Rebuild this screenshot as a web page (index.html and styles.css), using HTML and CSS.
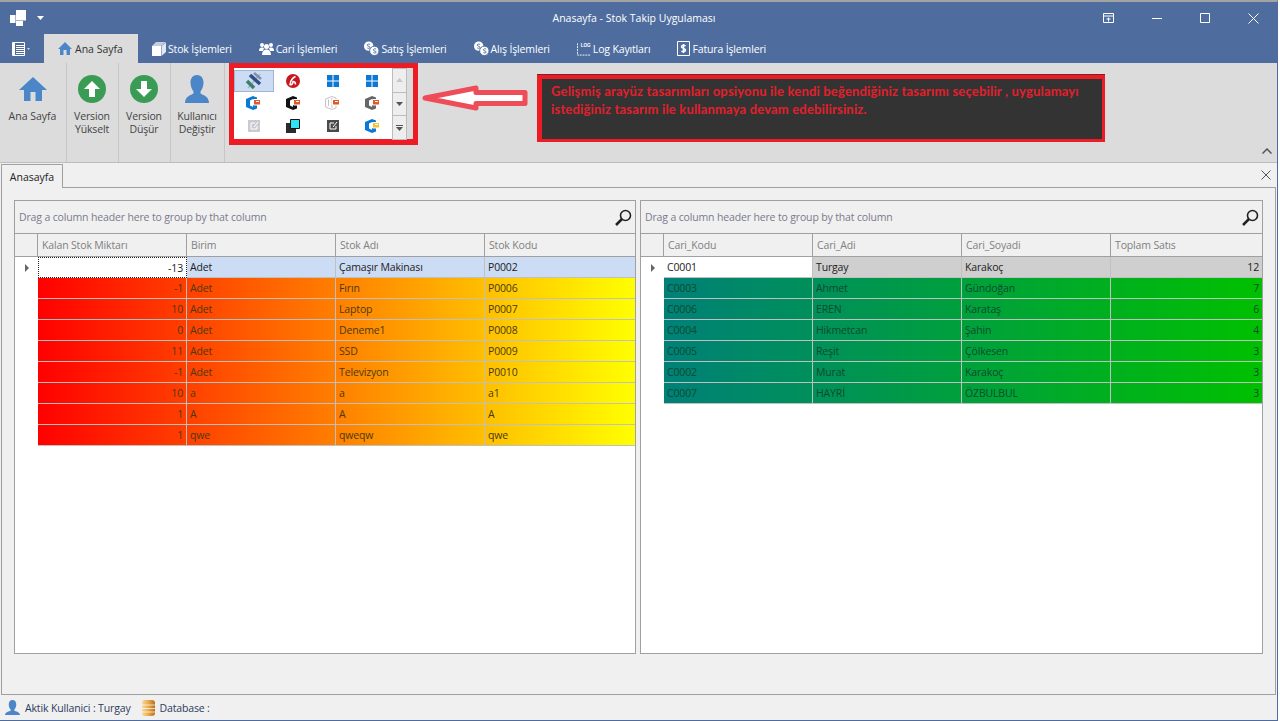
FILE: index.html
```html
<!DOCTYPE html>
<html lang="en">
<head>
  <meta charset="UTF-8">
  <title>Anasayfa - Stok Takip Uygulaması</title>
  <link rel="stylesheet" href="styles.css">
</head>
<body>
  <div class="window">
    <div class="titlebar">
      <div class="title-left">
        <svg width="17" height="16" viewBox="0 0 17 16"><path fill="#fff" d="M0 5h5.500v8H0zM6 0h10v10.500H6zM6 11h7v5H6z"/></svg>
        <svg class="title-caret" width="7" height="4" viewBox="0 0 7 4"><path fill="#fff" d="M0 0h7L3.500 4z"/></svg>
      </div>
      <div class="title-text">Anasayfa - Stok Takip Uygulaması</div>
      <div class="win-buttons">
        <div class="win-btn"><svg width="12" height="11" viewBox="0 0 12 11"><path fill="none" stroke="#fff" d="M.5.5h10v9H.5zM.5 3h10M5.500 4.500v4M3.500 6h4"/></svg></div>
        <div class="win-btn"><svg width="11" height="11" viewBox="0 0 11 11"><path stroke="#fff" d="M0 5.500h10"/></svg></div>
        <div class="win-btn"><svg width="11" height="11" viewBox="0 0 11 11"><path fill="none" stroke="#fff" d="M.5.5h9v9h-9z"/></svg></div>
        <div class="win-btn"><svg width="11" height="11" viewBox="0 0 11 11"><path stroke="#fff" d="M.5.5l10 10M10.500.5l-10 10"/></svg></div>
      </div>
    </div>

    <div class="tabs">
      <div class="file-btn">
        <svg width="13" height="14" viewBox="0 0 13 14"><path fill="none" stroke="#fff" d="M.5.5h12v13H.5z"/><path fill="#fff" d="M1 1h2v12H1z"/><path stroke="#fff" d="M4 3.500h8M4 5.500h8M4 7.500h8M4 9.500h8M4 11.500h8"/></svg>
        <svg width="3" height="2" viewBox="0 0 3 2"><path fill="#cfd8e6" d="M0 0h3L1.500 2z"/></svg>
      </div>
      <div class="tab active">
        <svg width="14" height="13" viewBox="0 0 14 13"><path fill="#4a86c8" d="M7 0l7 7h-2v6H8.500V8h-3v5H2V7H0z"/></svg>
        Ana Sayfa
      </div>
      <div class="tab">
        <svg width="14" height="14" viewBox="0 0 14 14"><path fill="#fff" d="M0 4h9v10H0z"/><path fill="#c4cede" d="M0 4l4-4h10L9 4z"/><path fill="#e4e8ef" d="M9.500 4L14 .5V10l-4.500 4z"/></svg>
        Stok İşlemleri
      </div>
      <div class="tab">
        <svg width="15" height="13" viewBox="0 0 15 13"><g fill="#fff"><circle cx="3" cy="3" r="2"/><circle cx="12" cy="3" r="2"/><path d="M0 9c0-3 1.500-3.500 3-3.500S5 6 5 6L4 9z"/><path d="M15 9c0-3-1.500-3.500-3-3.500S10 6 10 6l1 3z"/><circle cx="7.500" cy="4.500" r="2.500"/><path d="M3 13c0-4 2.500-5.500 4.500-5.500S12 9 12 13z"/></g></svg>
        Cari İşlemleri
      </div>
      <div class="tab">
        <svg width="15" height="15" viewBox="0 0 16 15"><circle cx="5" cy="5" r="5" fill="#fff"/><circle cx="11" cy="10" r="5" fill="#fff" stroke="#4e6d9e"/><path fill="none" stroke="#4e6d9e" d="M6.500 3.200C5.500 2.500 3.500 2.700 3.500 4s3 1 3 2.300S4 7.500 3.500 6.800M13 8.200c-1-.7-3-.5-3 .8s3 1 3 2.300-2.500 1.200-3 .5"/></svg>
        Satış İşlemleri
      </div>
      <div class="tab">
        <svg width="15" height="15" viewBox="0 0 16 15"><circle cx="5" cy="5" r="5" fill="#fff"/><circle cx="11" cy="10" r="5" fill="#fff" stroke="#4e6d9e"/><path fill="none" stroke="#4e6d9e" d="M6.500 3.200C5.500 2.500 3.500 2.700 3.500 4s3 1 3 2.300S4 7.500 3.500 6.800M13 8.200c-1-.7-3-.5-3 .8s3 1 3 2.300-2.500 1.200-3 .5"/></svg>
        Alış İşlemleri
      </div>
      <div class="tab">
        <svg width="14" height="14" viewBox="0 0 15 14"><path fill="none" stroke="#fff" d="M.5 1v12.500H15" stroke-dasharray="2 1"/><text x="4" y="5" fill="#fff" font-family="Liberation Sans" font-size="5" font-weight="700">LOG</text></svg>
        Log Kayıtları
      </div>
      <div class="tab">
        <svg width="13" height="15" viewBox="0 0 13 15"><path fill="none" stroke="#fff" d="M.5.500h12v14H.5z"/><path fill="none" stroke="#fff" stroke-width="1.500" d="M8.500 5c-1-1-4-1-4 .8s4 1.400 4 3.300c0 1.900-3 1.900-4 .9M6.500 3v9"/></svg>
        Fatura İşlemleri
      </div>
    </div>

    <div class="ribbon">
      <div class="rb-item rb-home">
        <svg width="28" height="24" viewBox="0 0 28 24"><path fill="#4a86c8" d="M14 0l14 13h-5v11h-6.500v-9h-5v9H5V13H0z"/></svg>
        <span>Ana Sayfa</span>
      </div>
      <div class="rb-item">
        <svg width="28" height="28" viewBox="0 0 28 28"><circle cx="14" cy="14" r="14" fill="#3a9c54"/><path fill="#fff" d="M14 6l8 8h-5v8h-6v-8H6z"/></svg>
        <span>Version<br>Yükselt</span>
      </div>
      <div class="rb-item">
        <svg width="28" height="28" viewBox="0 0 28 28"><circle cx="14" cy="14" r="14" fill="#3a9c54"/><path fill="#fff" d="M14 22l8-8h-5V6h-6v8H6z"/></svg>
        <span>Version<br>Düşür</span>
      </div>
      <div class="rb-item rb-user">
        <svg width="24" height="28" viewBox="0 0 24 28"><path fill="#4a86c8" d="M12 0c4 0 6.500 3 6.500 7.500 0 4-1.500 7-3 9v2c2 1.500 8.500 2.500 8.500 9.500H0c0-7 6.500-8 8.500-9.500v-2c-1.500-2-3-5-3-9C5.500 3 8 0 12 0z"/></svg>
        <span>Kullanıcı<br>Değiştir</span>
      </div>

      <div class="gallery-box">
        <div class="gallery">
          <div class="skin selected">
            <svg width="18" height="18" viewBox="0 0 18 18"><path stroke="#a9b4c6" stroke-width="1.500" d="M15 2L3 16"/><path stroke="#2f4f86" stroke-width="3.500" d="M5 3l10 9"/><path stroke="#3f7f68" stroke-width="3.500" d="M2 9l7 7"/><path stroke="#7f8fa8" stroke-width="2.500" d="M9 1l7 6"/></svg>
          </div>
          <div class="skin">
            <svg width="14" height="14" viewBox="0 0 14 14"><circle cx="7" cy="7" r="7" fill="#c8171e"/><path fill="none" stroke="#fff" stroke-width="1.500" d="M9.500 2.500C6 4 4.500 7 4 10.500c2 1 3-1.500 3-3 1 0 2.500.5 2.500 3"/></svg>
          </div>
          <div class="skin">
            <svg width="12" height="12" viewBox="0 0 12 12"><path fill="#0a78d4" d="M0 0h5.500v5.500H0zM6.500 0H12v5.500H6.500zM0 6.500h5.500V12H0zM6.500 6.500H12V12H6.500z"/></svg>
          </div>
          <div class="skin">
            <svg width="12" height="12" viewBox="0 0 12 12"><path fill="#0a78d4" d="M0 0h5.500v5.500H0zM6.500 0H12v5.500H6.500zM0 6.500h5.500V12H0zM6.500 6.500H12V12H6.500z"/></svg>
          </div>

          <div class="skin">
            <svg width="15" height="14" viewBox="0 0 15 14"><path fill="#0a78d4" fill-rule="evenodd" d="M7 0L0 3v8l7 3 4-1.500v-11zM4 4.500L7 3v8L4 9.500z"/><path fill="#e0592a" stroke="#fff" d="M7.500 3.500h7v5.500h-7z"/><path stroke="#fff" d="M10 5.500h3"/></svg>
          </div>
          <div class="skin">
            <svg width="15" height="14" viewBox="0 0 15 14"><path fill="#111" fill-rule="evenodd" d="M7 0L0 3v8l7 3 4-1.500v-11zM4 4.500L7 3v8L4 9.500z"/><path fill="#e0592a" stroke="#fff" d="M7.500 3.500h7v5.500h-7z"/><path stroke="#fff" d="M10 5.500h3"/></svg>
          </div>
          <div class="skin">
            <svg width="15" height="14" viewBox="0 0 15 14"><path fill="#fff" stroke="#c4c4c4" d="M7 .5L.5 3v8L7 13.500l4-1.500V2zM3.500 3.500v6.500M7 2v10"/><path fill="#e0592a" stroke="#fff" d="M7.500 3.500h7v5.500h-7z"/><path stroke="#fff" d="M10 5.500h3"/></svg>
          </div>
          <div class="skin">
            <svg width="15" height="14" viewBox="0 0 15 14"><path fill="#666" fill-rule="evenodd" d="M7 0L0 3v8l7 3 4-1.500v-11zM4 4.500L7 3v8L4 9.500z"/><path fill="#e0592a" stroke="#fff" d="M7.500 3.500h7v5.500h-7z"/><path stroke="#fff" d="M10 5.500h3"/></svg>
          </div>

          <div class="skin">
            <svg width="12" height="12" viewBox="0 0 12 12"><path fill="#c9cbd1" d="M0 0h12v12H0z"/><path fill="none" stroke="#fff" d="M3 3h4M3 3v6h6V6M6 7l4-5"/></svg>
          </div>
          <div class="skin">
            <svg width="14" height="14" viewBox="0 0 14 14"><path fill="#2b2b2b" d="M0 4h10v10H0z"/><path fill="#2ce5f6" stroke="#111" d="M4.500.5h9v9h-9z"/></svg>
          </div>
          <div class="skin">
            <svg width="12" height="12" viewBox="0 0 12 12"><path fill="#4a4a4a" d="M0 0h12v12H0z"/><path fill="none" stroke="#fff" d="M3 3h4M3 3v6h6V6M6 7l4-5"/></svg>
          </div>
          <div class="skin">
            <svg width="15" height="14" viewBox="0 0 15 14"><path fill="#0a78d4" fill-rule="evenodd" d="M7 0L0 3v8l7 3 4-1.500v-11zM4 4.500L7 3v8L4 9.500z"/><path fill="#f4c430" stroke="#fff" d="M7.500 3.500h7v5.500h-7z"/><path stroke="#fff" d="M10 5.500h3"/></svg>
          </div>
        </div>
        <div class="gallery-scroll">
          <div class="scroll-btn"><svg width="7" height="4" viewBox="0 0 7 4"><path fill="#c8c8c8" d="M3.500 0L7 4H0z"/></svg></div>
          <div class="scroll-btn"><svg width="7" height="4" viewBox="0 0 7 4"><path fill="#555" d="M0 0h7L3.500 4z"/></svg></div>
          <div class="scroll-btn"><svg width="7" height="6" viewBox="0 0 7 6"><path fill="#555" d="M0 0h7v1H0zM0 2h7L3.500 6z"/></svg></div>
        </div>
      </div>

      <svg class="arrow" width="108" height="28" viewBox="0 0 108 28"><path fill="#fff" stroke="#ee4c58" stroke-width="5" stroke-linejoin="round" d="M5 14L56 4v4.500h49v11H56V24z"/></svg>

      <div class="note">Gelişmiş arayüz tasarımları opsiyonu ile kendi beğendiğiniz tasarımı seçebilir , uygulamayı istediğiniz tasarım ile kullanmaya devam edebilirsiniz.</div>

      <svg class="collapse" width="10" height="6" viewBox="0 0 10 6"><path fill="none" stroke="#555" stroke-width="1.500" d="M.5 5.500L5 1l4.500 4.500"/></svg>
    </div>

    <div class="doc-tabs">
      <div class="doc-tab">Anasayfa</div>
      <svg class="doc-close" width="10" height="10" viewBox="0 0 10 10"><path stroke="#555" d="M.5.500l9 9M9.500.500l-9 9"/></svg>
    </div>

    <div class="doc-page">
      <div class="grid grid-left">
        <div class="group-panel">
          Drag a column header here to group by that column
          <svg class="search" width="17" height="17" viewBox="0 0 17 17"><circle cx="10.500" cy="6.500" r="5" fill="none" stroke="#222" stroke-width="1.600"/><path stroke="#222" stroke-width="2.500" d="M7 10l-6 6"/></svg>
        </div>
        <div class="row head">
          <div class="cell ind"></div>
          <div class="cell">Kalan Stok Miktarı</div>
          <div class="cell">Birim</div>
          <div class="cell">Stok Adı</div>
          <div class="cell">Stok Kodu</div>
        </div>
        <div class="row focus-blue">
          <div class="cell ind"><i class="pointer"></i></div>
          <div class="cell num focus-cell">-13</div>
          <div class="cell">Adet</div>
          <div class="cell">Çamaşır Makinası</div>
          <div class="cell">P0002</div>
        </div>
        <div class="row hot"><div class="cell ind"></div><div class="cell num">-1</div><div class="cell">Adet</div><div class="cell">Fırın</div><div class="cell">P0006</div></div>
        <div class="row hot"><div class="cell ind"></div><div class="cell num">10</div><div class="cell">Adet</div><div class="cell">Laptop</div><div class="cell">P0007</div></div>
        <div class="row hot"><div class="cell ind"></div><div class="cell num">0</div><div class="cell">Adet</div><div class="cell">Deneme1</div><div class="cell">P0008</div></div>
        <div class="row hot"><div class="cell ind"></div><div class="cell num">11</div><div class="cell">Adet</div><div class="cell">SSD</div><div class="cell">P0009</div></div>
        <div class="row hot"><div class="cell ind"></div><div class="cell num">-1</div><div class="cell">Adet</div><div class="cell">Televizyon</div><div class="cell">P0010</div></div>
        <div class="row hot"><div class="cell ind"></div><div class="cell num">10</div><div class="cell">a</div><div class="cell">a</div><div class="cell">a1</div></div>
        <div class="row hot"><div class="cell ind"></div><div class="cell num">1</div><div class="cell">A</div><div class="cell">A</div><div class="cell">A</div></div>
        <div class="row hot"><div class="cell ind"></div><div class="cell num">1</div><div class="cell">qwe</div><div class="cell">qweqw</div><div class="cell">qwe</div></div>
      </div>

      <div class="grid">
        <div class="group-panel">
          Drag a column header here to group by that column
          <svg class="search" width="17" height="17" viewBox="0 0 17 17"><circle cx="10.500" cy="6.500" r="5" fill="none" stroke="#222" stroke-width="1.600"/><path stroke="#222" stroke-width="2.500" d="M7 10l-6 6"/></svg>
        </div>
        <div class="row head">
          <div class="cell ind"></div>
          <div class="cell">Cari_Kodu</div>
          <div class="cell">Cari_Adi</div>
          <div class="cell">Cari_Soyadi</div>
          <div class="cell">Toplam Satıs</div>
        </div>
        <div class="row focus-gray">
          <div class="cell ind"><i class="pointer"></i></div>
          <div class="cell first-white">C0001</div>
          <div class="cell">Turgay</div>
          <div class="cell">Karakoç</div>
          <div class="cell num">12</div>
        </div>
        <div class="row green"><div class="cell ind"></div><div class="cell">C0003</div><div class="cell">Ahmet</div><div class="cell">Gündoğan</div><div class="cell num">7</div></div>
        <div class="row green"><div class="cell ind"></div><div class="cell">C0006</div><div class="cell">EREN</div><div class="cell">Karataş</div><div class="cell num">6</div></div>
        <div class="row green"><div class="cell ind"></div><div class="cell">C0004</div><div class="cell">Hikmetcan</div><div class="cell">Şahin</div><div class="cell num">4</div></div>
        <div class="row green"><div class="cell ind"></div><div class="cell">C0005</div><div class="cell">Reşit</div><div class="cell">Çölkesen</div><div class="cell num">3</div></div>
        <div class="row green"><div class="cell ind"></div><div class="cell">C0002</div><div class="cell">Murat</div><div class="cell">Karakoç</div><div class="cell num">3</div></div>
        <div class="row green"><div class="cell ind"></div><div class="cell">C0007</div><div class="cell">HAYRİ</div><div class="cell">ÖZBULBUL</div><div class="cell num">3</div></div>
      </div>
    </div>

    <div class="statusbar">
      <svg width="15" height="15" viewBox="0 0 24 24"><path fill="#4a86c8" d="M12 0c4 0 6 3 6 7 0 3-1 6-3 8v2c2 1 9 2 9 7H0c0-5 7-6 9-7v-2c-2-2-3-5-3-8 0-4 2-7 6-7z"/></svg>
      <span class="status-user">Aktik Kullanici : Turgay</span>
      <svg class="db-icon" width="13" height="16" viewBox="0 0 13 16"><defs><linearGradient id="db" x1="0" x2="1" y1="0" y2="0"><stop offset="0" stop-color="#f8d9a0"/><stop offset=".5" stop-color="#eaa94a"/><stop offset="1" stop-color="#b8701c"/></linearGradient></defs><rect width="13" height="16" rx="3" fill="url(#db)"/><path stroke="#fff" stroke-opacity=".7" d="M0 5h13M0 8.500h13M0 12h13"/></svg>
      <span>Database :</span>
    </div>
  </div>
</body>
</html>
```

FILE: styles.css
```css
* {
  box-sizing: border-box;
  margin: 0;
  padding: 0;
}

body {
  background: #fff;
  font-family: "Open Sans", sans-serif;
  font-size: 10.5px;
  letter-spacing: -0.15px;
  color: #222;
  overflow: hidden;
}

.window {
  width: 1278px;
  height: 721px;
  display: flex;
  flex-direction: column;
  border-top: 2px solid #a3a3a3;
  border-bottom: 1px solid #4e6d9e;
  border-right: 1px solid #4e6d9e;
  background: #f0f0f0;
}

/* title bar */
.titlebar {
  height: 32px;
  display: grid;
  grid-template-columns: 1fr auto 1fr;
  align-items: center;
  background: #4e6d9e;
  color: #fff;
}

.title-left {
  display: flex;
  align-items: center;
  padding-left: 10px;
}

.title-caret {
  margin-left: 10px;
}

.title-text {
  padding-right: 9px;
  letter-spacing: 0;
}

.win-buttons {
  display: flex;
  justify-content: flex-end;
}

.win-btn {
  width: 48px;
  height: 32px;
  display: flex;
  align-items: center;
  justify-content: center;
}

/* ribbon tabs */
.tabs {
  height: 29px;
  display: flex;
  background: #4e6d9e;
  color: #fff;
  padding-left: 12px;
}

.file-btn {
  width: 32px;
  display: flex;
  align-items: center;
  gap: 2px;
}

.tab {
  display: flex;
  align-items: center;
  gap: 2px;
  padding: 0 13.5px;
  white-space: nowrap;
}

.tab.active {
  width: 94px;
  padding: 0 14px;
  margin-right: 0.5px;
  background: #dcdcdc;
  color: #333;
  gap: 3px;
  letter-spacing: 0;
}

/* ribbon */
.ribbon {
  height: 100px;
  display: flex;
  background: #dcdcdc;
  border-bottom: 1px solid #bdbdbd;
  color: #444;
}

.rb-item {
  width: 52px;
  height: 99px;
  display: flex;
  flex-direction: column;
  align-items: center;
  padding-top: 12px;
  padding-right: 1px;
  border-right: 1px solid #c6c6c6;
  text-align: center;
  line-height: 13px;
}

.rb-item span {
  margin-top: 7px;
}

.rb-home {
  width: 67px;
  padding-top: 14px;
  letter-spacing: 0;
}

.rb-home span {
  margin-top: 9px;
}

.rb-user {
  width: 54px;
}

.gallery-box {
  margin-left: 4px;
  width: 189px;
  height: 82px;
  display: flex;
  border: 5px solid #ed1c24;
  border-bottom-width: 6px;
  background: #dcdcdc;
}

.gallery {
  width: 158px;
  display: grid;
  grid-template-columns: repeat(4, 1fr);
  grid-auto-rows: 1fr;
  padding: 2px 0;
  background: #fff;
}

.skin {
  display: flex;
  align-items: center;
  justify-content: center;
}

.skin.selected {
  background: #ccdcf5;
  border: 1px solid #a5b4cc;
}

.gallery-scroll {
  width: 15px;
  display: flex;
  flex-direction: column;
}

.scroll-btn {
  flex: 1;
  display: flex;
  align-items: center;
  justify-content: center;
  background: #eeeeee;
  border: 1px solid #bcbcbc;
  margin-bottom: -1px;
}

.arrow {
  margin: 21px 0 0 2px;
}

.note {
  width: 568px;
  height: 67px;
  margin: 12px 0 0 9px;
  padding: 3px 9px;
  background: #333;
  border-style: solid;
  border-color: #ed1c24;
  border-width: 4px 3px 3px 5px;
  box-shadow: 0 -1px 0 #7a2228;
  color: #e2202c;
  font-family: Lato, sans-serif;
  font-size: 13px;
  font-weight: 700;
  letter-spacing: 0.18px;
  line-height: 18px;
}

.collapse {
  margin: auto 5px 8px auto;
}

/* document tabs */
.doc-tabs {
  height: 24px;
  display: flex;
  align-items: flex-end;
  justify-content: space-between;
  padding-left: 1px;
  padding-right: 6px;
}

.doc-tab {
  width: 62px;
  height: 24px;
  display: flex;
  align-items: center;
  justify-content: center;
  background: #f0f0f0;
  border: 1px solid #a0a0a0;
  border-bottom: none;
  position: relative;
  z-index: 1;
  margin-bottom: -1px;
  letter-spacing: 0;
}

.doc-close {
  margin-bottom: 7px;
}

.doc-page {
  flex: 1;
  display: flex;
  gap: 4px;
  margin-left: 1px;
  margin-right: 1px;
  padding: 12px 12px 40px 12px;
  border: 1px solid #a0a0a0;
}

/* data grids */
.grid {
  flex: 1;
  display: flex;
  flex-direction: column;
  background: #fff;
  border: 1px solid #a0a0a0;
}

.grid-left {
  flex: 0 0 622px;
}

.group-panel {
  height: 33px;
  display: flex;
  align-items: center;
  justify-content: space-between;
  padding: 0 3px 0 4px;
  background: #f0f0f0;
  border-bottom: 1px solid #a0a0a0;
  color: #7a7a8c;
}

.row {
  height: 21px;
  display: grid;
  grid-template-columns: 23px 149px 149px 149px 1fr;
}

.cell {
  display: flex;
  align-items: center;
  padding: 0 3px;
  border-right: 1px solid #c0c0c0;
  border-bottom: 1px solid #c0c0c0;
  white-space: nowrap;
}

.cell:last-child {
  border-right: none;
}

.cell.ind {
  background: #fff;
  border: none;
  justify-content: center;
}

.cell.num {
  justify-content: flex-end;
}

.row.head {
  height: 23px;
  color: #808080;
  background: #f0f0f0;
}

.row.head .cell {
  padding-left: 4px;
  border-color: #a0a0a0;
}

.row.head .cell.ind {
  background: #f0f0f0;
  border-right: 1px solid #a0a0a0;
  border-bottom: 1px solid #a0a0a0;
}

.pointer {
  width: 0;
  height: 0;
  border-left: 4px solid #666;
  border-top: 4px solid transparent;
  border-bottom: 4px solid transparent;
}

.focus-blue {
  background: #ccdcf5;
}

.focus-cell {
  background: #fff;
  border: 1px dotted #222;
}

.focus-gray {
  background: #cfcfcf;
}

.first-white {
  background: #fff;
}

.hot {
  background: linear-gradient(90deg, #fff 23px, #ff0000 23px, #ffff00);
  color: #4a3a10;
}

.green {
  background: linear-gradient(90deg, #fff 23px, #008078 23px, #00c000);
  color: #0d4a30;
}

/* status bar */
.statusbar {
  height: 25px;
  display: flex;
  align-items: center;
  padding-left: 5px;
  background: #f0f0f0;
  color: #2a3b5c;
}

.status-user {
  margin-left: 5px;
}

.db-icon {
  margin: 0 5px 0 11px;
}

.search {
  flex: none;
}
```
